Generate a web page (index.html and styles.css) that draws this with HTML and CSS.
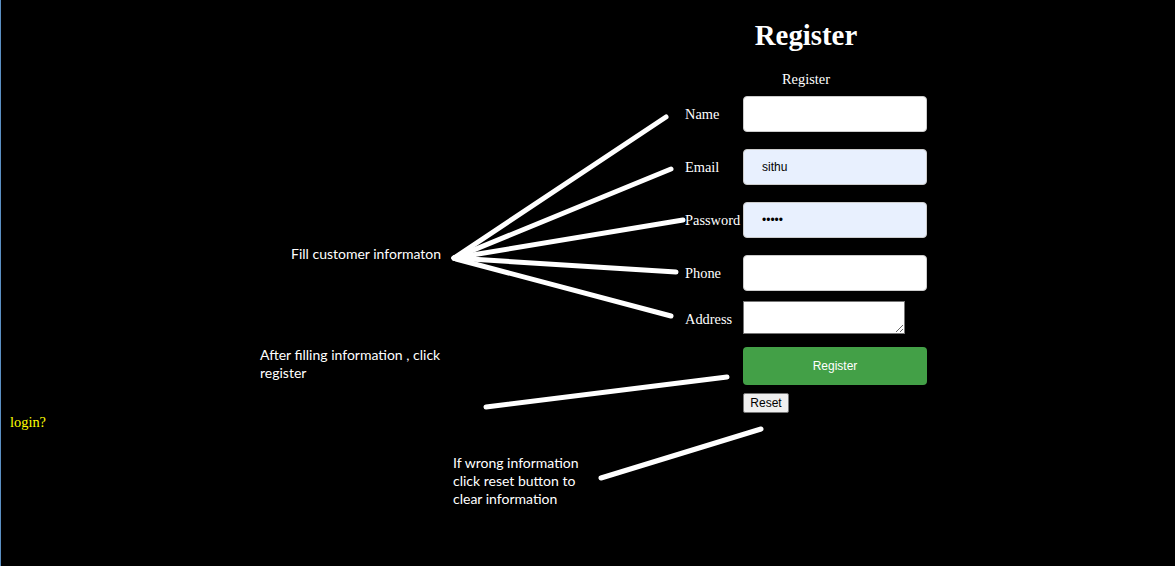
FILE: index.html
```html
<!DOCTYPE html>
<html lang="en">
<head>
  <meta charset="UTF-8" />
  <meta name="viewport" content="width=device-width, initial-scale=1.0"/>
  <title>Register</title>
  <link rel="stylesheet" href="styles.css">
</head>
<body>

<div class="page">
  <div class="side">
    <a class="login" href="#">login?</a>
  </div>

  <div class="main">
    <h1 class="title">Register</h1>
    <form class="form">
      <div class="caption">Register</div>
      <div class="grid">
        <label class="lbl">Name</label>
        <input class="field" type="text">

        <label class="lbl">Email</label>
        <input class="field filled" type="text" value="sithu">

        <label class="lbl">Password</label>
        <input class="field filled" type="password" value="sithu">

        <label class="lbl">Phone</label>
        <input class="field" type="text">

        <label class="lbl lbl-address">Address</label>
        <div><textarea class="area"></textarea></div>

        <span></span>
        <div class="actions">
          <button class="btn-register" type="button">Register</button>
          <button class="btn-reset" type="reset">Reset</button>
        </div>
      </div>
    </form>
  </div>
</div>

<!-- annotations drawn over the screenshot -->
<svg class="arrows" width="1175" height="566" viewBox="0 0 1175 566">
  <g stroke="#fff" stroke-width="5" stroke-linecap="round" fill="none">
    <line x1="453" y1="258" x2="665" y2="117"/>
    <line x1="453" y1="258" x2="670" y2="169"/>
    <line x1="453" y1="258" x2="682" y2="220"/>
    <line x1="453" y1="258" x2="675" y2="272"/>
    <line x1="455" y1="259" x2="670" y2="316"/>
    <line x1="485" y1="407" x2="726" y2="377"/>
    <line x1="600" y1="478" x2="760" y2="429"/>
  </g>
</svg>
<div class="note note-fill">Fill customer informaton</div>
<div class="note note-after">After filling information , click<br>register</div>
<div class="note note-reset">If wrong information<br>click reset button to<br>clear information</div>

</body>
</html>
```

FILE: styles.css
```css
body {
  background-color: #000;
  margin: 0;
  padding: 0;
  border-left: 1px solid #5b8fc2;
  height: 566px;
  box-sizing: border-box;
  font-family: 'Liberation Serif', serif;
  color: #fff;
  position: relative;
  overflow: hidden;
}

.page {
  display: flex;
}

.side {
  width: 436px;
  padding: 413px 0 0 9px;
  box-sizing: border-box;
}

.login {
  color: #ffff00;
  font-size: 14.4px;
  text-decoration: none;
}

.main {
  flex: 1;
  display: flex;
  flex-direction: column;
  align-items: center;
}

.title {
  font-size: 28.8px;
  font-weight: bold;
  margin: 19px 0 19px;
  line-height: 33px;
}

.form {
  font-size: 14.4px;
  margin-right: 2px;
}

.caption {
  text-align: center;
  line-height: 17px;
  height: 17px;
  padding-left: 2px;
}

.grid {
  display: grid;
  grid-template-columns: 58px 184px;
  column-gap: 2px;
  row-gap: 1px;
  align-items: center;
}

.lbl {
  padding-left: 2px;
}

.lbl-address {
  padding-top: 4px;
}

.field {
  width: 184px;
  height: 36px;
  margin: 8px 0;
  box-sizing: border-box;
  border: 1px solid #ccc;
  border-radius: 4px;
  padding: 0 18px;
  font-family: 'Liberation Sans', Arial, sans-serif;
  font-size: 12px;
  background: #fff;
  color: #000;
}

.filled {
  background: #e8f0fe;
}

.area {
  display: block;
  width: 162px;
  height: 33px;
  margin: 1px 0 0;
  box-sizing: border-box;
  border: 1px solid #767676;
  padding: 2px;
  background: #fff;
}

.actions {
  display: flex;
  flex-direction: column;
  align-items: flex-start;
  padding-top: 12px;
}

.btn-register {
  width: 184px;
  height: 38px;
  background: #43a047;
  color: #fff;
  border: none;
  border-radius: 4px;
  font-family: 'Liberation Sans', Arial, sans-serif;
  font-size: 12px;
}

.btn-reset {
  margin-top: 8px;
  height: 20px;
  width: 46px;
  padding: 0;
  background: #efefef;
  border: 1px solid #767676;
  border-radius: 2px;
  font-family: 'Liberation Sans', Arial, sans-serif;
  font-size: 12px;
  color: #000;
}

.arrows {
  position: absolute;
  left: 0;
  top: 0;
}

.note {
  position: absolute;
  font-family: Lato, 'Open Sans', sans-serif;
  font-size: 14px;
  line-height: 18px;
  color: #fff;
}

.note-fill {
  left: 290px;
  top: 245px;
}

.note-after {
  left: 259px;
  top: 346px;
}

.note-reset {
  left: 452px;
  top: 454px;
}
```
